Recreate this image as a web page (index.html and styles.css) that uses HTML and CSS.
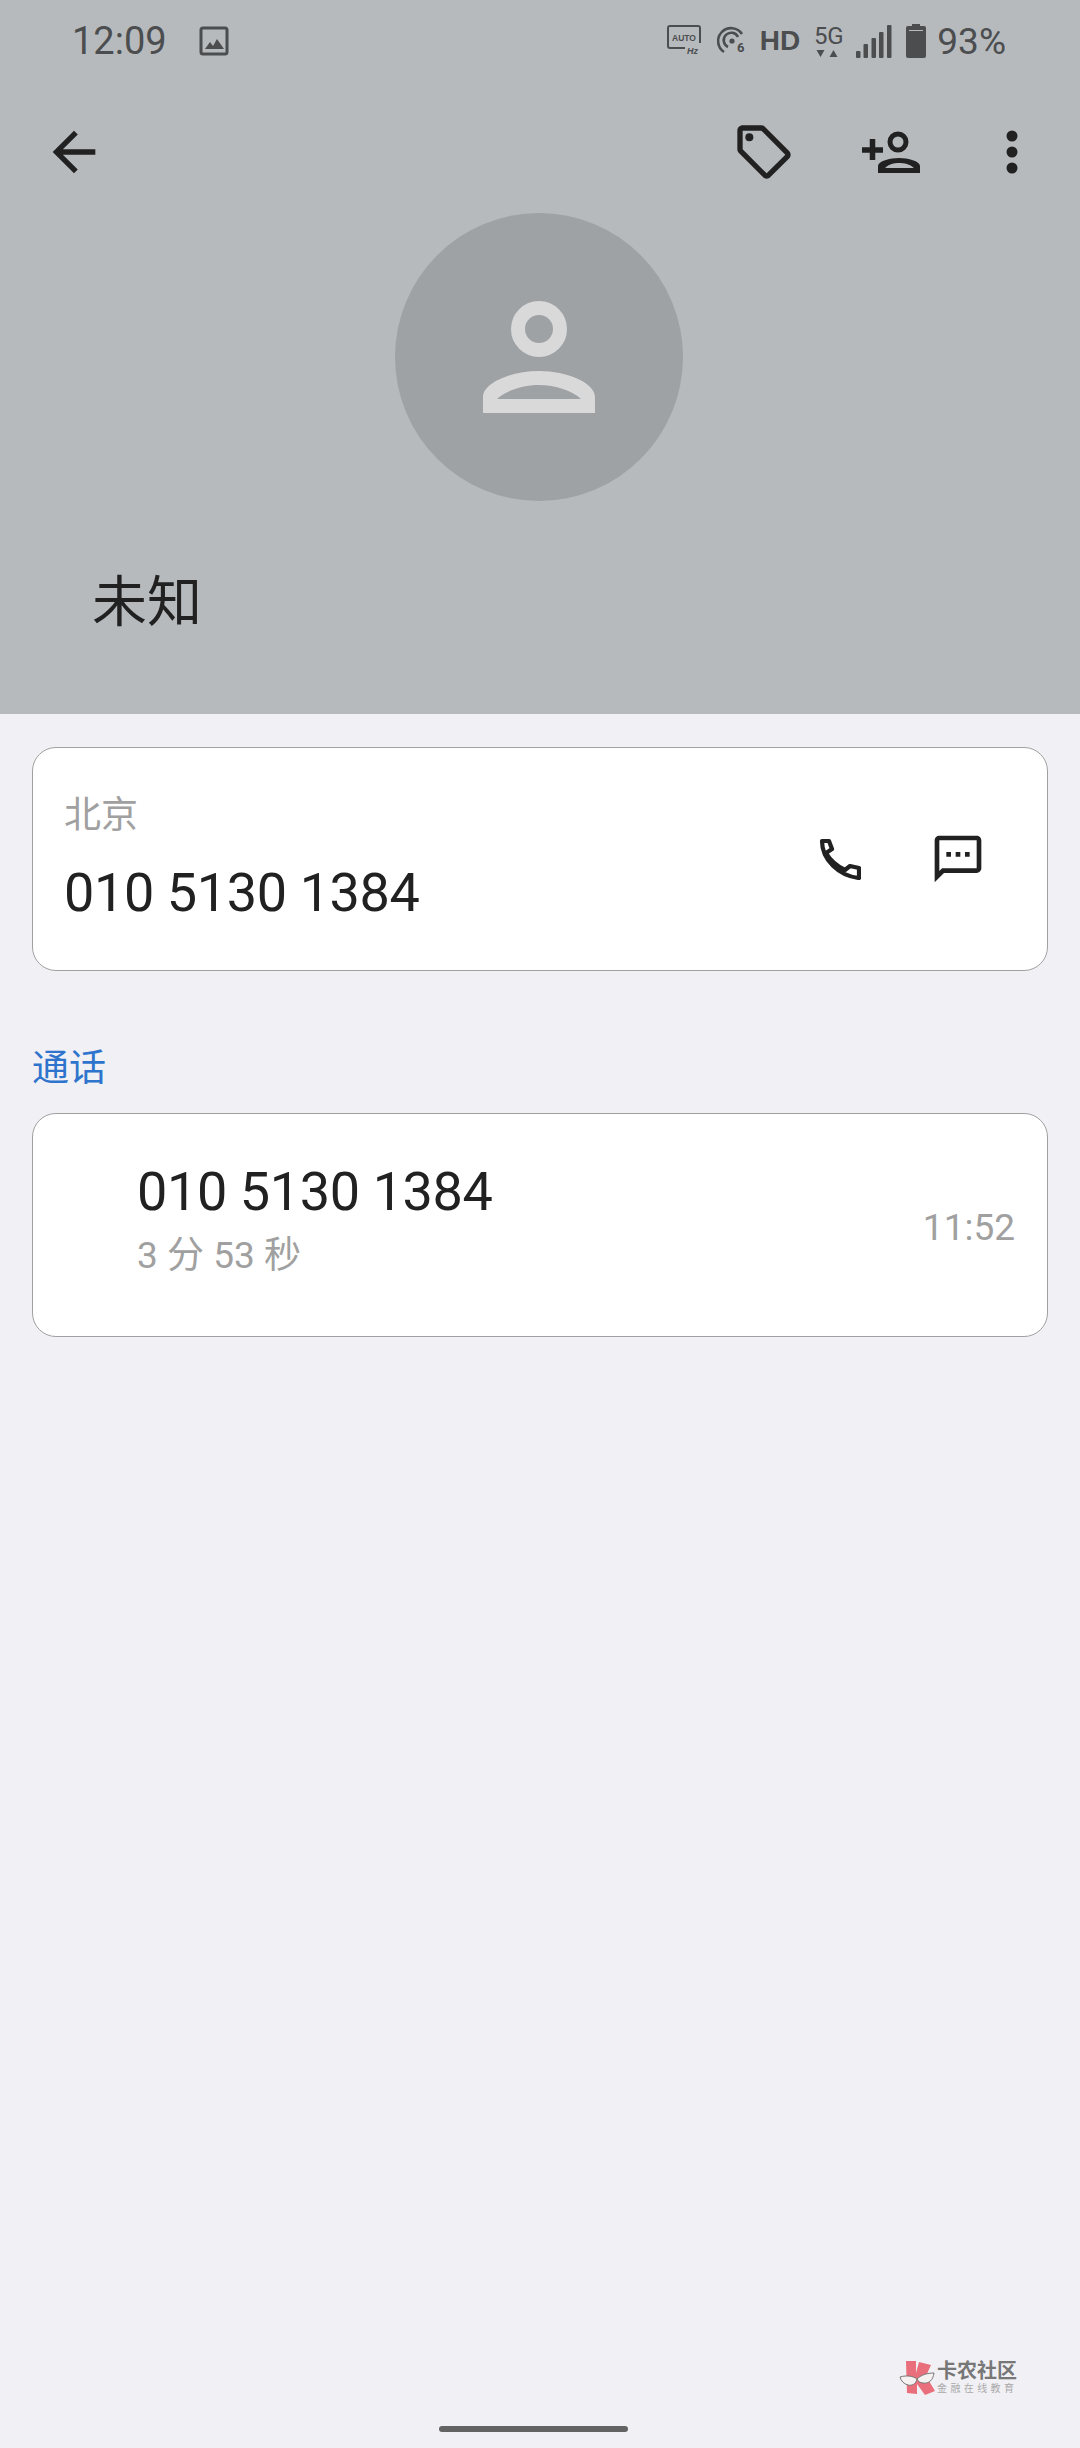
FILE: index.html
```html
<!DOCTYPE html>
<html lang="zh-CN">
<head>
  <meta charset="UTF-8" />
  <meta name="viewport" content="width=device-width, initial-scale=1.0"/>
  <title>未知</title>
  <link rel="stylesheet" href="styles.css">
</head>
<body>
  <div class="header">
    <!-- Status bar -->
    <div class="status-bar">
      <span class="status-time">12:09</span>
      <svg class="ic-gallery" viewBox="0 0 30 30">
        <rect x="2" y="2" width="26" height="26" rx="2" fill="none" stroke="#4b4d4f" stroke-width="3"/>
        <path d="M6 23 L11 16 L14 20 L18 13 L25 23 Z" fill="#4b4d4f"/>
      </svg>
      <div class="status-right">
        <svg class="ic-auto" viewBox="0 0 34 32">
          <path d="M9 23 H3 a2 2 0 0 1 -2 -2 V3 a2 2 0 0 1 2 -2 H31 a2 2 0 0 1 2 2 V18 M9 23 H18" fill="none" stroke="#4b4d4f" stroke-width="2"/>
          <text x="5" y="16" class="auto-text" textLength="24" lengthAdjust="spacingAndGlyphs">AUTO</text>
          <text x="20" y="29" class="hz-text">Hz</text>
        </svg>
        <svg class="ic-wifi" viewBox="0 0 30 30">
          <path d="M7 26 A13 13 0 1 1 25 8" fill="none" stroke="#4b4d4f" stroke-width="2.6"/>
          <path d="M11 21 A7.5 7.5 0 1 1 21 11" fill="none" stroke="#4b4d4f" stroke-width="2.6"/>
          <circle cx="15" cy="15" r="2.6" fill="#4b4d4f"/>
          <text x="20" y="26" class="wifi-text">6</text>
        </svg>
        <span class="status-hd">HD</span>
        <div class="status-5g">
          <span>5G</span>
          <svg class="ic-arrows" viewBox="0 0 26 7">
            <path d="M1 0 H9 L5 7 Z M14 7 H22 L18 0 Z" fill="#4b4d4f"/>
          </svg>
        </div>
        <svg class="ic-signal" viewBox="0 0 36 33">
          <rect x="0" y="26" width="4.5" height="7" rx="1" fill="#4b4d4f"/>
          <rect x="7.5" y="19" width="4.5" height="14" rx="1" fill="#4b4d4f"/>
          <rect x="15.5" y="13" width="4.5" height="20" rx="1" fill="#4b4d4f"/>
          <rect x="23" y="7" width="4.5" height="26" rx="1" fill="#4b4d4f"/>
          <rect x="31" y="0" width="4.5" height="33" rx="1" fill="#4b4d4f"/>
        </svg>
        <svg class="ic-battery" viewBox="0 0 20 34">
          <path d="M6 0 H14 V2 H18 a2 2 0 0 1 2 2 V32 a2 2 0 0 1 -2 2 H2 a2 2 0 0 1 -2 -2 V4 a2 2 0 0 1 2 -2 H6 Z" fill="#4b4d4f"/>
          <rect x="3" y="6" width="14" height="1" fill="#b6babd"/>
        </svg>
        <span class="status-battery">93%</span>
      </div>
    </div>

    <!-- Toolbar -->
    <div class="toolbar">
      <svg class="ic-24" viewBox="0 0 24 24">
        <path d="M20 11H7.83l5.59-5.59L12 4l-8 8 8 8 1.41-1.41L7.83 13H20v-2z"/>
      </svg>
      <div class="toolbar-actions">
        <svg class="ic-24" viewBox="0 0 24 24">
          <path d="M21.41 11.58l-9-9C12.05 2.22 11.55 2 11 2H4c-1.1 0-2 .9-2 2v7c0 .55.22 1.05.59 1.42l9 9c.36.36.86.58 1.41.58s1.05-.22 1.41-.59l7-7c.37-.36.59-.86.59-1.41s-.23-1.06-.59-1.42zM13 20.01L4 11V4h7v-.01l9 9-7 7.02z"/>
          <circle cx="6.5" cy="6.5" r="1.5"/>
        </svg>
        <svg class="ic-add" viewBox="0 0 60 42">
          <circle cx="37" cy="11" r="8" fill="none" stroke="#212121" stroke-width="5"/>
          <path d="M1 19 H22 M11.5 8 V29" fill="none" stroke="#212121" stroke-width="5.5"/>
          <path fill-rule="evenodd" d="M17 42 V35 C17 30 29 27 38 27 C47 27 59 30 59 35 V42 Z M24 37 H53 C49 33 43 32 38 32 C33 32 28 33 24 37 Z" fill="#212121"/>
        </svg>
        <svg class="ic-more" viewBox="0 0 12 44">
          <circle cx="6" cy="6" r="5.5"/>
          <circle cx="6" cy="22" r="5.5"/>
          <circle cx="6" cy="38" r="5.5"/>
        </svg>
      </div>
    </div>

    <div class="avatar">
      <svg class="ic-person" viewBox="0 0 112 112">
        <circle cx="56" cy="28" r="21" fill="none" stroke="#d9d9d9" stroke-width="14"/>
        <path fill-rule="evenodd" d="M0 112 V96 C0 82 28 70 56 70 C84 70 112 82 112 96 V112 Z M14 98 H98 C90 90 72 84 56 84 C40 84 22 90 14 98 Z" fill="#d9d9d9"/>
      </svg>
    </div>

    <div class="contact-name">未知</div>
  </div>

  <div class="main">
    <div class="card card-number">
      <div class="number-info">
        <div class="label">北京</div>
        <div class="phone">010 5130 1384</div>
      </div>
      <svg class="ic-phone" viewBox="0 0 42 42">
        <path d="M3 3 H10 L13 11 L7 15 C11 22 18 28 26 32 L31 28 L40 30 V40 C20 38 3 22 3 3 Z" fill="none" stroke="#212121" stroke-width="4.2" stroke-linejoin="round"/>
      </svg>
      <svg class="ic-sms" viewBox="0 0 24 24">
        <path d="M20 2H4c-1.1 0-2 .9-2 2v18l4-4h14c1.1 0 2-.9 2-2V4c0-1.1-.9-2-2-2zm0 14H5.17L4 17.17V4h16v12zM7 9h2v2H7zm8 0h2v2h-2zm-4 0h2v2h-2z"/>
      </svg>
    </div>

    <div class="section-title">通话</div>

    <div class="card card-call">
      <div class="call-info">
        <div class="phone">010 5130 1384</div>
        <div class="label call-duration">3 分 53 秒</div>
      </div>
      <div class="call-time">11:52</div>
    </div>
  </div>

  <!-- Watermark -->
  <div class="watermark">
    <svg class="wm-logo" viewBox="0 0 36 36">
      <path d="M7 1 H17 V13 L20 2 L32 5 L27 16 L36 31 L26 35 L18 24 V34 L8 33 Z" fill="#e86f7b"/>
      <path d="M1 17 C8 15 14 16 18 19 C22 15 28 13 35 13 C34 20 30 24 24 23 C21 23 19 21 18 19 C17 24 13 26 9 25 C5 24 2 21 1 17 Z" fill="#f7f2f2" stroke="#777" stroke-width="1"/>
    </svg>
    <div class="wm-text">
      <div class="wm-title">卡农社区</div>
      <div class="wm-sub">金融在线教育</div>
    </div>
  </div>

  <div class="home-bar"></div>
</body>
</html>
```

FILE: styles.css
```css
/* RESET & BASE */
* {
  margin: 0; padding: 0;
  box-sizing: border-box;
}
html, body {
  width: 1080px; height: 2448px;
}
body {
  position: relative;
  overflow: hidden;
  background: #f1f0f4;
  color: #212121;
  font-family: Roboto, "Noto Sans CJK SC", sans-serif;
}
svg { display: block; flex: none; }

/* HEADER */
.header {
  height: 714px;
  background: #b6babd;
}

/* STATUS BAR */
.status-bar {
  height: 92px;
  padding: 0 74px 10px 72px;
  display: flex; align-items: center;
  color: #4b4d4f;
}
.status-time { font-size: 38px; }
.ic-gallery { width: 30px; height: 30px; margin-left: 32px; }
.status-right {
  margin-left: auto;
  display: flex; align-items: center;
}
.ic-auto { width: 34px; height: 32px; }
.auto-text { font: 700 9.5px "Liberation Sans", sans-serif; fill: #4b4d4f; }
.hz-text { font: italic 700 9px "Liberation Sans", sans-serif; fill: #4b4d4f; }
.ic-wifi { width: 30px; height: 30px; margin-left: 16px; }
.wifi-text { font: 700 13px Roboto, sans-serif; fill: #4b4d4f; }
.status-hd {
  margin-left: 13px;
  font: 700 28px "Liberation Sans", sans-serif;
}
.status-5g {
  margin-left: 15px;
  width: 27px;
  display: flex; flex-direction: column; align-items: center;
  font-size: 24px; line-height: 22px;
}
.ic-arrows { width: 27px; height: 7px; margin-top: 3px; }
.ic-signal { width: 36px; height: 33px; margin-left: 14px; }
.ic-battery { width: 20px; height: 34px; margin-left: 14px; }
.status-battery {
  margin-left: 11px;
  font-size: 37px;
}

/* TOOLBAR */
.toolbar {
  height: 120px;
  padding: 0 62px 0 42px;
  display: flex; align-items: center;
}
.toolbar-actions {
  margin-left: auto;
  display: flex; align-items: center;
}
.ic-24 { width: 64px; height: 64px; fill: #212121; }
.ic-add { width: 60px; height: 42px; margin-left: 65px; }
.ic-more { width: 12px; height: 44px; margin-left: 85px; fill: #212121; }

/* AVATAR */
.avatar {
  width: 288px; height: 288px;
  margin: 1px 0 0 395px;
  border-radius: 50%;
  background: #9fa2a5;
  display: flex; align-items: center; justify-content: center;
}
.ic-person { width: 112px; height: 112px; }

.contact-name {
  margin-top: 66px;
  padding-left: 92px;
  font-size: 55px;
  line-height: 70px;
  color: #212121;
}

/* CARDS */
.main { padding: 33px 32px 0 32px; }
.card {
  height: 224px;
  background: #fff;
  border: 1px solid #a0a0a0;
  border-radius: 24px;
  display: flex;
}
.label {
  font-size: 37px; line-height: 48px;
  color: #a0a0a0;
}
.phone {
  font-size: 54px; line-height: 70px;
  letter-spacing: -0.4px;
  color: #212121;
}

.card-number { align-items: center; padding-left: 31px; }
.number-info { margin-right: auto; margin-top: 1px; }
.number-info .phone { margin-top: 18px; }
.ic-phone { width: 42px; height: 42px; margin-right: 69px; }
.ic-sms { width: 56px; height: 56px; margin-right: 61px; fill: #212121; }

.section-title {
  margin-top: 78px; margin-bottom: 24px;
  font-size: 37px; line-height: 40px;
  color: #2f74cc;
}

.card-call { align-items: center; padding: 0 32px 0 104px; }
.call-info { margin-top: -13px; }
.call-duration { margin-top: 5px; }
.call-time {
  margin-left: auto; margin-top: 5px;
  font-size: 37px; color: #a0a0a0;
}

/* WATERMARK */
.watermark {
  position: absolute; left: 899px; top: 2360px;
  display: flex; align-items: center; gap: 2px;
}
.wm-logo { width: 36px; height: 36px; }
.wm-title {
  font-size: 20px; line-height: 22px; font-weight: 700;
  color: #777;
}
.wm-sub {
  font-size: 10px; line-height: 14px;
  letter-spacing: 3.4px;
  color: #aaa;
}

.home-bar {
  position: absolute; left: 439px; top: 2426px;
  width: 189px; height: 6px;
  border-radius: 3px;
  background: #636363;
}
```
